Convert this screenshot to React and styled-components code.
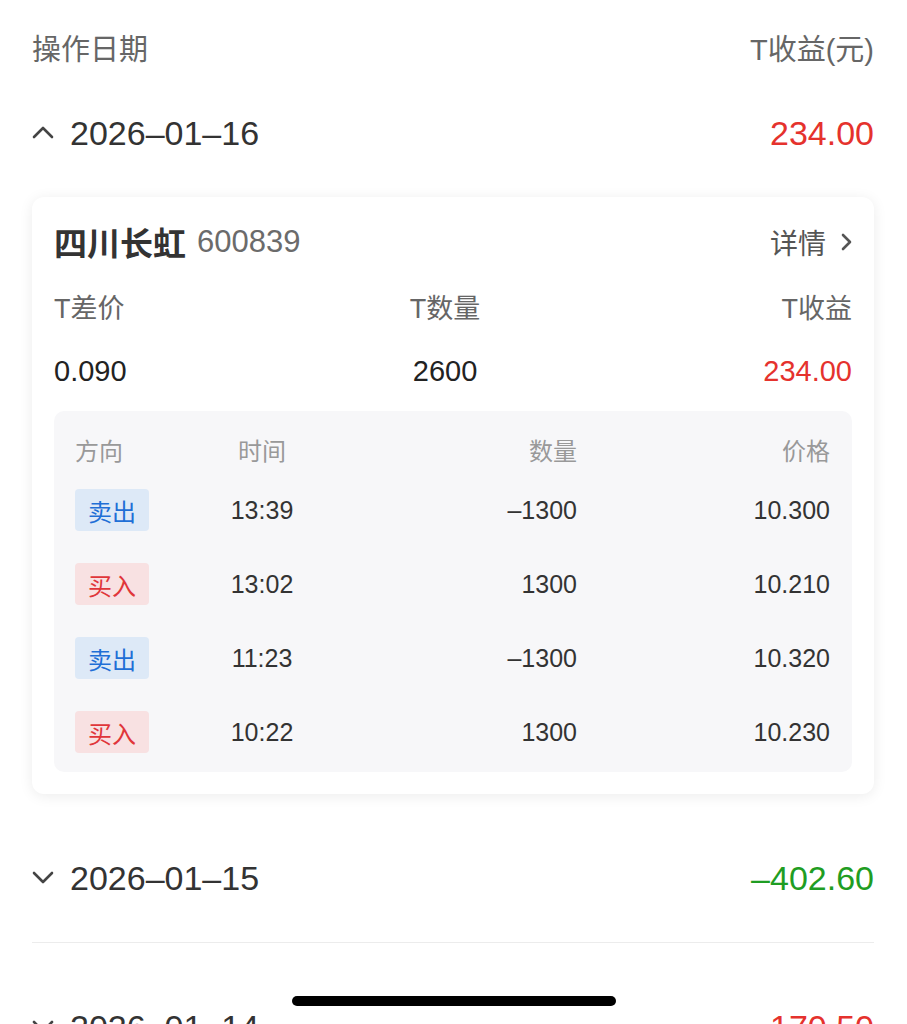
import styled, { createGlobalStyle } from "styled-components";

const GlobalStyle = createGlobalStyle`
  html, body {
    margin: 0;
    padding: 0;
    background: #fff;
    font-family: "Liberation Sans", "Noto Sans CJK SC", sans-serif;
    color: #333;
  }
  * { box-sizing: border-box; }
`;

const RED = "#e5322d";
const GREEN = "#1f9d23";

const trades = [
  { side: "sell", time: "13:39", qty: "–1300", price: "10.300" },
  { side: "buy", time: "13:02", qty: "1300", price: "10.210" },
  { side: "sell", time: "11:23", qty: "–1300", price: "10.320" },
  { side: "buy", time: "10:22", qty: "1300", price: "10.230" },
];

const days = [
  { date: "2026–01–16", profit: "234.00", up: true, open: true },
  { date: "2026–01–15", profit: "–402.60", up: false },
  { date: "2026–01–14", profit: "170.50", up: true },
  { date: "2026–01–13", profit: "88.20", up: true },
];

function Chevron({ open }) {
  return (
    <svg width="22" height="14" viewBox="0 0 22 14">
      <path
        d={open ? "M2 12 L11 3 L20 12" : "M2 3 L11 12 L20 3"}
        fill="none"
        stroke="#444"
        strokeWidth="2.6"
        strokeLinecap="round"
        strokeLinejoin="round"
      />
    </svg>
  );
}

function StockCard() {
  return (
    <Card>
      <CardHead>
        <Title>
          <b>四川长虹</b>
          <span>600839</span>
        </Title>
        <Detail>
          详情
          <svg width="14" height="20" viewBox="0 0 14 20">
            <path
              d="M3 3 L10 10 L3 17"
              fill="none"
              stroke="#555"
              strokeWidth="2.6"
              strokeLinecap="round"
              strokeLinejoin="round"
            />
          </svg>
        </Detail>
      </CardHead>

      <Metrics>
        <Metric $align="left">
          <label>T差价</label>
          <strong>0.090</strong>
        </Metric>
        <Metric $align="center">
          <label>T数量</label>
          <strong>2600</strong>
        </Metric>
        <Metric $align="right">
          <label>T收益</label>
          <strong style={{ color: RED }}>234.00</strong>
        </Metric>
      </Metrics>

      <TradeTable>
        <TradeHead>
          <span>方向</span>
          <span>时间</span>
          <span>数量</span>
          <span>价格</span>
        </TradeHead>
        {trades.map((t, i) => (
          <TradeRow key={i}>
            <Badge $side={t.side}>{t.side === "sell" ? "卖出" : "买入"}</Badge>
            <span>{t.time}</span>
            <span>{t.qty}</span>
            <span>{t.price}</span>
          </TradeRow>
        ))}
      </TradeTable>
    </Card>
  );
}

export default function App() {
  return (
    <Page>
      <GlobalStyle />
      <Header>
        <span>操作日期</span>
        <span>T收益(元)</span>
      </Header>
      {days.map((d) => (
        <Group key={d.date} $open={d.open}>
          <DateRow>
            <DateLabel>
              <Chevron open={d.open} />
              {d.date}
            </DateLabel>
            <Profit $up={d.up}>{d.profit}</Profit>
          </DateRow>
          {d.open && <StockCard />}
        </Group>
      ))}
      <HomeBar />
    </Page>
  );
}

const Page = styled.div`
  padding: 0 33px 40px 32px;
  height: 1024px;
  overflow: hidden;
`;

const Header = styled.div`
  display: flex;
  justify-content: space-between;
  align-items: center;
  padding: 30px 0 23px;
  line-height: 40px;
  font-size: 29px;
  color: #666;
`;

const Group = styled.div`
  padding-bottom: ${(p) => (p.$open ? "0" : "24px")};
  border-bottom: ${(p) => (p.$open ? "none" : "1px solid #ececec")};
  & + & {
    margin-top: 44px;
  }
`;

const DateRow = styled.div`
  height: 80px;
  display: flex;
  justify-content: space-between;
  align-items: center;
  font-size: 34px;
`;

const DateLabel = styled.div`
  display: flex;
  align-items: center;
  gap: 16px;
  color: #333;
  svg {
    margin-top: -2px;
  }
`;

const Profit = styled.div`
  color: ${(p) => (p.$up ? RED : GREEN)};
`;

const Card = styled.div`
  margin-top: 24px;
  background: #fff;
  border-radius: 12px;
  box-shadow: 0 2px 14px rgba(0, 0, 0, 0.08);
  padding: 22px 22px 22px 22px;
`;

const CardHead = styled.div`
  display: flex;
  justify-content: space-between;
  align-items: center;
  height: 46px;
`;

const Title = styled.div`
  display: flex;
  align-items: center;
  gap: 11px;
  b {
    font-size: 33px;
    font-weight: 700;
    color: #333;
  }
  span {
    font-size: 31px;
    color: #6b6b6b;
  }
`;

const Detail = styled.div`
  display: flex;
  align-items: center;
  gap: 14px;
  font-size: 28px;
  color: #555;
  margin-right: -2px;
`;

const Metrics = styled.div`
  display: grid;
  grid-template-columns: 0.97fr 1fr 1.03fr;
  margin-top: 26px;
`;

const Metric = styled.div`
  display: flex;
  flex-direction: column;
  gap: 26px;
  text-align: ${(p) => p.$align};
  label {
    font-size: 27px;
    line-height: 36px;
    color: #666;
  }
  strong {
    font-size: 29px;
    line-height: 36px;
    font-weight: 500;
    color: #222;
  }
`;

const TradeTable = styled.div`
  margin-top: 22px;
  background: #f7f7f9;
  border-radius: 10px;
  padding: 15px 22px 3px 21px;
`;

const columns = `150px 74px 278px 1fr`;

const TradeHead = styled.div`
  display: grid;
  grid-template-columns: ${columns};
  align-items: center;
  height: 47px;
  font-size: 24px;
  color: #999;
  span:nth-child(2) { text-align: center; }
  span:nth-child(3), span:nth-child(4) { text-align: right; }
`;

const TradeRow = styled.div`
  display: grid;
  grid-template-columns: ${columns};
  align-items: center;
  height: 74px;
  font-size: 25px;
  color: #333;
  span:nth-child(2) { text-align: center; }
  span:nth-child(3), span:nth-child(4) { text-align: right; }
`;

const Badge = styled.span`
  width: 74px;
  height: 42px;
  display: flex;
  align-items: center;
  justify-content: center;
  border-radius: 4px;
  font-size: 24px;
  background: ${(p) => (p.$side === "sell" ? "#dde9f7" : "#f8e1e2")};
  color: ${(p) => (p.$side === "sell" ? "#1f6fd6" : "#e0363a")};
`;

const HomeBar = styled.div`
  position: fixed;
  left: 50%;
  bottom: 18px;
  transform: translateX(-50%);
  width: 324px;
  height: 10px;
  border-radius: 5px;
  background: #000;
`;
